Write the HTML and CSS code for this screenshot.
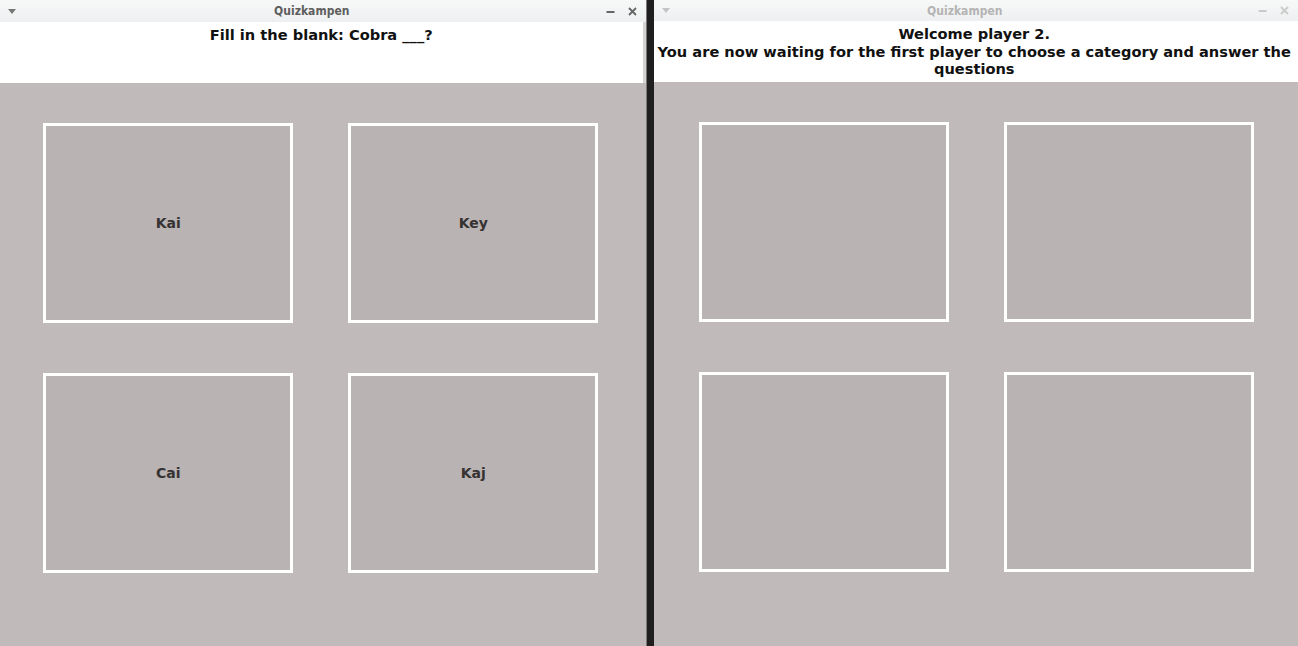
FILE: index.html
```html
<!DOCTYPE html>
<html lang="en">
<head>
    <meta charset="UTF-8">
    <title>Quizkampen</title>
    <link rel="stylesheet" href="styles.css">
</head>
<body>
    <div class="desktop">
        <!-- player 1 window -->
        <div class="window active">
            <div class="titlebar">
                <span class="menu-arrow"></span>
                <span class="title">Quizkampen</span>
                <span class="controls">
                    <svg width="9" height="9" viewBox="0 0 9 9"><path d="M0.5 5h8" stroke="currentColor" stroke-width="2"/></svg>
                    <svg width="9" height="9" viewBox="0 0 9 9"><path d="M1 1l7 7M8 1l-7 7" stroke="currentColor" stroke-width="1.8"/></svg>
                </span>
            </div>
            <div class="header">Fill in the blank: Cobra ___?</div>
            <div class="board">
                <button class="answer">Kai</button>
                <button class="answer">Key</button>
                <button class="answer">Cai</button>
                <button class="answer">Kaj</button>
            </div>
        </div>

        <div class="divider"></div>

        <!-- player 2 window -->
        <div class="window inactive">
            <div class="titlebar">
                <span class="menu-arrow"></span>
                <span class="title">Quizkampen</span>
                <span class="controls">
                    <svg width="9" height="9" viewBox="0 0 9 9"><path d="M0.5 5h8" stroke="currentColor" stroke-width="2"/></svg>
                    <svg width="9" height="9" viewBox="0 0 9 9"><path d="M1 1l7 7M8 1l-7 7" stroke="currentColor" stroke-width="1.8"/></svg>
                </span>
            </div>
            <div class="header">Welcome player 2.<br>You are now waiting for the first player to choose a category and answer the questions</div>
            <div class="board">
                <button class="answer"></button>
                <button class="answer"></button>
                <button class="answer"></button>
                <button class="answer"></button>
            </div>
        </div>
    </div>
</body>
</html>
```

FILE: styles.css
```css
/* Two Swing windows side by side */
html, body {
    margin: 0;
    padding: 0;
    height: 100%;
}
body {
    background: #c0baba;
    font-family: "DejaVu Sans", sans-serif;
    overflow: hidden;
}
.desktop {
    display: flex;
    height: 646px;
}
.window {
    display: flex;
    flex-direction: column;
    background: #c0baba;
}
.active {
    width: 646px;
}
.inactive {
    width: 645px;
}
.titlebar {
    height: 22px;
    display: flex;
    align-items: center;
    background: linear-gradient(to bottom, #f7f8f8, #eeeff0);
    font-family: "DejaVu Sans Condensed", "DejaVu Sans", sans-serif;
    font-size: 12px;
    font-weight: bold;
    color: #5e5e5e;
}
.inactive .titlebar {
    height: 21px;
    color: #b4b4b4;
}
.menu-arrow {
    width: 0;
    height: 0;
    margin-left: 8px;
    border-left: 4px solid transparent;
    border-right: 4px solid transparent;
    border-top: 5px solid #777;
}
.inactive .menu-arrow {
    border-top-color: #c4c4c4;
}
.title {
    flex: 1;
    text-align: center;
    padding-left: 2px;
}
.controls {
    display: flex;
    align-items: center;
    gap: 13px;
    margin-right: 9px;
    color: #666;
}
.inactive .controls {
    color: #cacaca;
}
.header {
    height: 61px;
    background: #ffffff;
    text-align: center;
    font-family: "DejaVu Sans", sans-serif;
    font-size: 14.6px;
    font-weight: bold;
    line-height: 17.5px;
    color: #111;
    padding-top: 4px;
    box-sizing: border-box;
}
.active .header {
    border-right: 3px solid #d6d3d3;
}
.inactive .header {
    padding-right: 3px;
}
.board {
    display: grid;
    grid-template-columns: 250px 250px;
    grid-auto-rows: 200px;
    column-gap: 55px;
    row-gap: 50px;
    justify-content: center;
    padding-top: 40px;
}
.active .board {
    padding-right: 4px;
}
.inactive .board {
    padding-left: 2px;
}
.answer {
    background: #b9b3b3;
    border: 3px solid #ffffff;
    margin: 0;
    font-family: "DejaVu Sans", sans-serif;
    font-size: 14px;
    font-weight: bold;
    color: #363232;
}
.divider {
    width: 8px;
    background: #1f1f1f;
    border-left: 1px solid #7d7878;
    box-shadow: 2px 0 3px rgba(0, 0, 0, 0.15);
    box-sizing: border-box;
}
```
